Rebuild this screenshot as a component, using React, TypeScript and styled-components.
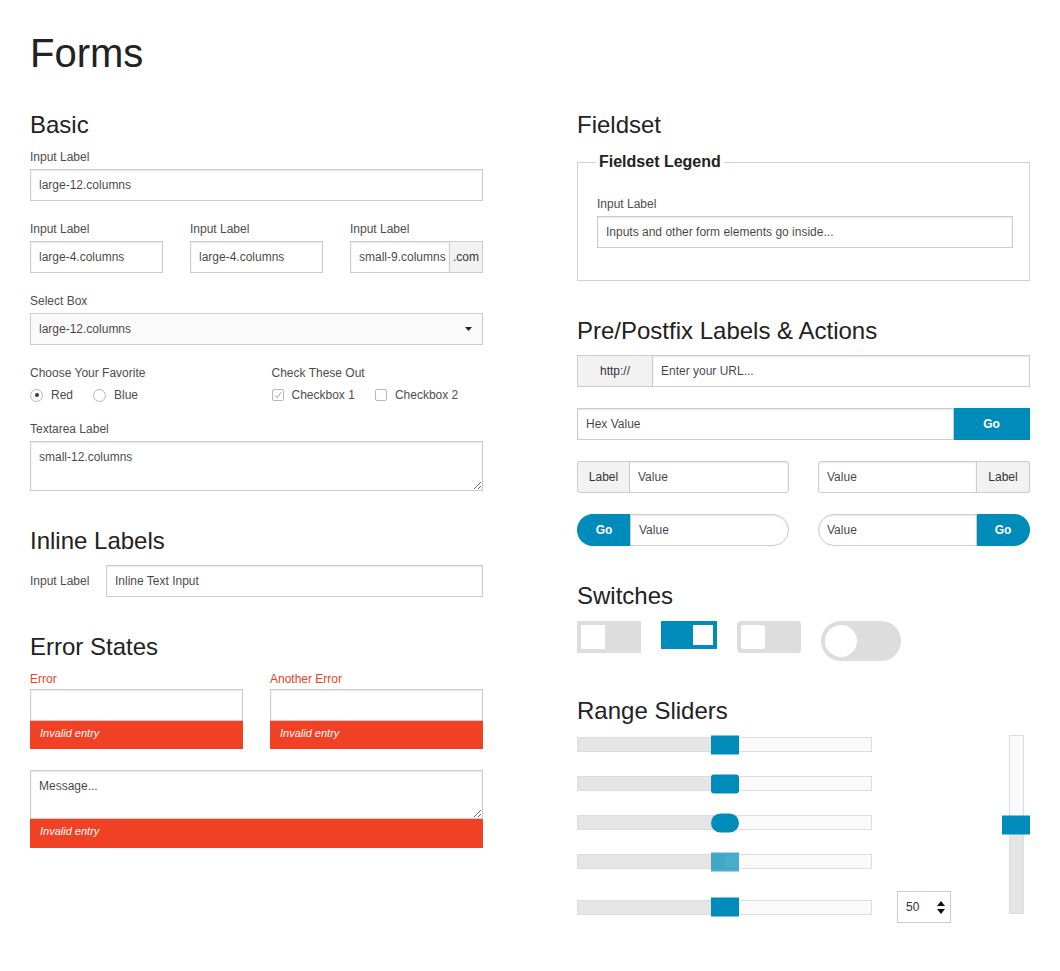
import { createGlobalStyle, styled } from 'styled-components'

type Shape = 'square' | 'radius' | 'round'

const blue = '#008cba'
const red = '#f04124'
const RADIUS: Record<Shape, string> = { square: '0', radius: '3px', round: '1000px' }
const left = (s: Shape) => `${RADIUS[s]} 0 0 ${RADIUS[s]}`
const right = (s: Shape) => `0 ${RADIUS[s]} ${RADIUS[s]} 0`

const switches = [
	{ w: 64, h: 32, knob: 24, shape: 'square' as Shape, on: false },
	{ w: 56, h: 28, knob: 20, shape: 'square' as Shape, on: true },
	{ w: 64, h: 32, knob: 24, shape: 'radius' as Shape, on: false },
	{ w: 80, h: 40, knob: 32, shape: 'round' as Shape, on: false },
]

const sliders = [
	{ shape: 'square' as Shape, value: 50 },
	{ shape: 'radius' as Shape, value: 50 },
	{ shape: 'round' as Shape, value: 50 },
	{ shape: 'square' as Shape, value: 50, disabled: true },
	{ shape: 'square' as Shape, value: 50, withNumber: true },
]

export default function App() {
	return (
		<>
			<GlobalStyle />
			<Page>
				<Title>Forms</Title>
				<Columns>
					<Column>
						<Section>
							<Heading>Basic</Heading>
							<Field>
								<Label>Input Label</Label>
								<TextInput readOnly defaultValue="large-12.columns" />
							</Field>
							<Field>
								<Grid $cols={3} $gap={27}>
									<div>
										<Label>Input Label</Label>
										<TextInput readOnly defaultValue="large-4.columns" />
									</div>
									<div>
										<Label>Input Label</Label>
										<TextInput readOnly defaultValue="large-4.columns" />
									</div>
									<div>
										<Label>Input Label</Label>
										<Group>
											<GroupInput readOnly defaultValue="small-9.columns" />
											<Addon $w={33} $side="right">.com</Addon>
										</Group>
									</div>
								</Grid>
							</Field>
							<Field>
								<Label>Select Box</Label>
								<SelectBox>
									<span>large-12.columns</span>
									<svg width="7" height="4" viewBox="0 0 7 4">
										<path d="M0 0h7L3.5 4z" fill="#222" />
									</svg>
								</SelectBox>
							</Field>
							<Field>
								<Grid $cols={2} $gap={30}>
									<div>
										<Label>Choose Your Favorite</Label>
										<OptionRow>
											<Option>
												<Radio $checked />
												Red
											</Option>
											<Option>
												<Radio />
												Blue
											</Option>
										</OptionRow>
									</div>
									<div>
										<Label>Check These Out</Label>
										<OptionRow>
											<Option>
												<Check>
													<svg width="10" height="10" viewBox="0 0 10 10">
														<path d="M2 5.2l2.2 2.6L8.2 2" fill="none" stroke="#a8a8a8" strokeWidth="1" />
													</svg>
												</Check>
												Checkbox 1
											</Option>
											<Option>
												<Check />
												Checkbox 2
											</Option>
										</OptionRow>
									</div>
								</Grid>
							</Field>
							<Field $gap={16}>
								<Label>Textarea Label</Label>
								<TextArea readOnly defaultValue="small-12.columns" $h={50} />
							</Field>
						</Section>

						<Section>
							<Heading>Inline Labels</Heading>
							<InlineRow>
								<InlineLabel>Input Label</InlineLabel>
								<TextInput readOnly defaultValue="Inline Text Input" />
							</InlineRow>
						</Section>

						<Section>
							<Heading>Error States</Heading>
							<Grid $cols={2} $gap={27}>
								<div>
									<Label $error>Error</Label>
									<TextInput readOnly />
									<ErrorBar>Invalid entry</ErrorBar>
								</div>
								<div>
									<Label $error>Another Error</Label>
									<TextInput readOnly />
									<ErrorBar>Invalid entry</ErrorBar>
								</div>
							</Grid>
							<Field $gap={21}>
								<TextArea readOnly defaultValue="Message..." $h={49} />
								<ErrorBar $tall>Invalid entry</ErrorBar>
							</Field>
						</Section>
					</Column>

					<Column>
						<Section>
							<Heading>Fieldset</Heading>
							<Fieldset>
								<Legend>Fieldset Legend</Legend>
								<Label>Input Label</Label>
								<TextInput readOnly defaultValue="Inputs and other form elements go inside..." />
							</Fieldset>
						</Section>

						<Section>
							<Heading>Pre/Postfix Labels &amp; Actions</Heading>
							<Rows>
								<Group>
									<Addon $w={75} $side="left">http://</Addon>
									<GroupInput readOnly defaultValue="Enter your URL..." />
								</Group>
								<Group>
									<GroupInput readOnly defaultValue="Hex Value" />
									<Addon $w={76} $side="right" $action>Go</Addon>
								</Group>
								<Grid $cols={2} $gap={29}>
									<Group>
										<Addon $w={52} $side="left" $r={left('radius')}>Label</Addon>
										<GroupInput readOnly defaultValue="Value" $r={right('radius')} />
									</Group>
									<Group>
										<GroupInput readOnly defaultValue="Value" $r={left('radius')} />
										<Addon $w={53} $side="right" $r={right('radius')}>Label</Addon>
									</Group>
								</Grid>
								<Grid $cols={2} $gap={29}>
									<Group>
										<Addon $w={53} $side="left" $action $r={left('round')}>Go</Addon>
										<GroupInput readOnly defaultValue="Value" $r={right('round')} />
									</Group>
									<Group>
										<GroupInput readOnly defaultValue="Value" $r={left('round')} />
										<Addon $w={53} $side="right" $action $r={right('round')}>Go</Addon>
									</Group>
								</Grid>
							</Rows>
						</Section>

						<Section>
							<Heading>Switches</Heading>
							<SwitchRow>
								{switches.map((s, i) => (
									<SwitchTrack key={i} $w={s.w} $h={s.h} $shape={s.shape} $on={s.on}>
										<Knob $size={s.knob} $shape={s.shape} />
									</SwitchTrack>
								))}
							</SwitchRow>
						</Section>

						<Section>
							<Heading>Range Sliders</Heading>
							<SliderArea>
								<SliderStack>
									{sliders.map((s, i) => (
										<SliderRow key={i} $tall={s.withNumber}>
											<Track>
												<Fill style={{ width: `${s.value}%` }} />
												<Handle $shape={s.shape} $disabled={s.disabled} style={{ left: `${s.value}%` }} />
											</Track>
											{s.withNumber && (
												<NumberBox>
													<span>50</span>
													<svg width="8" height="13" viewBox="0 0 8 13">
														<path d="M4 0L8 5H0z M0 8h8L4 13z" fill="#111" />
													</svg>
												</NumberBox>
											)}
										</SliderRow>
									))}
								</SliderStack>
								<VerticalWrap>
									<VerticalTrack>
										<VerticalFill style={{ height: '50%' }} />
										<VerticalHandle style={{ top: '50%' }} />
									</VerticalTrack>
								</VerticalWrap>
							</SliderArea>
						</Section>
					</Column>
				</Columns>
			</Page>
		</>
	)
}

const GlobalStyle = createGlobalStyle`
	* {
		box-sizing: border-box;
	}

	body {
		margin: 0;
		background: #fff;
		color: #222;
		font-family: "Liberation Sans", Arial, Helvetica, sans-serif;
	}
`

const Page = styled.main`
	padding: 33px 30px 40px;
`

const Title = styled.h1`
	margin: 0 0 40px;
	font-size: 40px;
	line-height: 40px;
	font-weight: 400;
	color: #222;
`

const Columns = styled.div`
	display: grid;
	grid-template-columns: 453px 453px;
	column-gap: 94px;
	align-items: start;
`

const Column = styled.div`
	display: flex;
	flex-direction: column;
	gap: 38px;
`

const Section = styled.section`
	display: flex;
	flex-direction: column;
`

const Heading = styled.h3`
	margin: 0 0 12px;
	font-size: 24px;
	line-height: 24px;
	font-weight: 400;
	color: #222;
`

const Field = styled.div<{ $gap?: number }>`
	margin-top: ${p => p.$gap ?? 20}px;

	${Heading} + & {
		margin-top: 0;
	}
`

const Grid = styled.div<{ $cols: number; $gap: number }>`
	display: grid;
	grid-template-columns: repeat(${p => p.$cols}, minmax(0, 1fr));
	column-gap: ${p => p.$gap}px;
`

const Rows = styled.div`
	display: flex;
	flex-direction: column;
	gap: 21px;
`

const Label = styled.label<{ $error?: boolean }>`
	display: block;
	margin-bottom: ${p => (p.$error ? 2 : 4)}px;
	font-size: 12px;
	line-height: 16px;
	color: ${p => (p.$error ? red : '#4d4d4d')};
`

const TextInput = styled.input`
	display: block;
	width: 100%;
	height: 32px;
	margin: 0;
	padding: 0 8px;
	border: 1px solid #ccc;
	border-radius: 0;
	background: #fff;
	box-shadow: inset 0 1px 2px rgba(0, 0, 0, 0.1);
	font-family: inherit;
	font-size: 12px;
	color: rgba(0, 0, 0, 0.75);
	outline: none;
`

const Group = styled.div`
	display: flex;
	height: 32px;
	min-width: 0;
`

const GroupInput = styled(TextInput)<{ $r?: string }>`
	flex: 1 1 0;
	min-width: 0;
	width: 0;
	padding-right: 2px;
	border-radius: ${p => p.$r ?? '0'};
`

const Addon = styled.span<{ $w: number; $side: 'left' | 'right'; $action?: boolean; $r?: string }>`
	flex: none;
	display: flex;
	align-items: center;
	justify-content: center;
	width: ${p => p.$w}px;
	border: 1px solid ${p => (p.$action ? blue : '#ccc')};
	${p => (p.$side === 'left' ? 'border-right: none;' : 'border-left: none;')}
	border-radius: ${p => p.$r ?? '0'};
	background: ${p => (p.$action ? blue : '#f2f2f2')};
	color: ${p => (p.$action ? '#fff' : '#333')};
	font-size: 12px;
	font-weight: ${p => (p.$action ? 700 : 400)};
`

const SelectBox = styled.div`
	display: flex;
	align-items: center;
	justify-content: space-between;
	height: 32px;
	padding: 0 10px 0 8px;
	border: 1px solid #ccc;
	background: #fafafa;
	font-size: 12px;
	color: rgba(0, 0, 0, 0.75);
`

const OptionRow = styled.div`
	display: flex;
	align-items: center;
	gap: 20px;
	height: 20px;
`

const Option = styled.label`
	display: flex;
	align-items: center;
	gap: 8px;
	font-size: 12px;
	color: #4d4d4d;
`

const Radio = styled.span<{ $checked?: boolean }>`
	display: flex;
	align-items: center;
	justify-content: center;
	width: 13px;
	height: 13px;
	border: 1px solid #b8b8b8;
	border-radius: 50%;
	background: #fff;

	&::after {
		content: '';
		width: 4px;
		height: 4px;
		border-radius: 50%;
		background: ${p => (p.$checked ? '#3a3a3a' : 'transparent')};
	}
`

const Check = styled.span`
	display: flex;
	align-items: center;
	justify-content: center;
	width: 12px;
	height: 12px;
	border: 1px solid #b8b8b8;
	border-radius: 2px;
	background: #fff;
`

const TextArea = styled.textarea<{ $h: number }>`
	display: block;
	width: 100%;
	height: ${p => p.$h}px;
	margin: 0;
	padding: 8px;
	border: 1px solid #ccc;
	box-shadow: inset 0 1px 2px rgba(0, 0, 0, 0.1);
	font-family: inherit;
	font-size: 12px;
	line-height: 14px;
	color: rgba(0, 0, 0, 0.75);
	outline: none;
`

const InlineRow = styled.div`
	display: grid;
	grid-template-columns: 76px minmax(0, 1fr);
	align-items: center;
`

const InlineLabel = styled.label`
	font-size: 12px;
	color: #4d4d4d;
`

const ErrorBar = styled.small<{ $tall?: boolean }>`
	display: block;
	padding: 6px 10px ${p => (p.$tall ? 10 : 9)}px;
	background: ${red};
	color: #fff;
	font-size: 11px;
	line-height: 13px;
	font-style: italic;
`

const Fieldset = styled.fieldset`
	min-width: 0;
	margin: 3px 0 0;
	padding: 24px 16px 32px 19px;
	border: 1px solid #d0d0d0;
`

const Legend = styled.legend`
	margin-left: -1px;
	padding: 0 3px;
	font-size: 16px;
	line-height: 20px;
	font-weight: 700;
	color: #222;
`

const SwitchRow = styled.div`
	display: flex;
	align-items: flex-start;
	gap: 20px;
	margin-top: 1px;
`

const SwitchTrack = styled.div<{ $w: number; $h: number; $shape: Shape; $on: boolean }>`
	display: flex;
	justify-content: ${p => (p.$on ? 'flex-end' : 'flex-start')};
	width: ${p => p.$w}px;
	height: ${p => p.$h}px;
	padding: 4px;
	border-radius: ${p => (p.$shape === 'radius' ? '4px' : RADIUS[p.$shape])};
	background: ${p => (p.$on ? blue : '#ddd')};
`

const Knob = styled.span<{ $size: number; $shape: Shape }>`
	width: ${p => p.$size}px;
	height: ${p => p.$size}px;
	border-radius: ${p => RADIUS[p.$shape]};
	background: #fff;
`

const SliderArea = styled.div`
	display: flex;
	justify-content: space-between;
	align-items: flex-start;
`

const SliderStack = styled.div`
	display: flex;
	flex-direction: column;
	gap: 20px;
`

const SliderRow = styled.div<{ $tall?: boolean }>`
	display: flex;
	align-items: center;
	gap: 25px;
	height: ${p => (p.$tall ? 32 : 19)}px;
`

const Track = styled.div`
	position: relative;
	width: 295px;
	height: 15px;
	border: 1px solid #ddd;
	background: #fafafa;
`

const Fill = styled.div`
	height: 100%;
	background: #e5e5e5;
`

const Handle = styled.span<{ $shape: Shape; $disabled?: boolean }>`
	position: absolute;
	top: 50%;
	width: 28px;
	height: 19px;
	transform: translate(-50%, -50%);
	border-radius: ${p => RADIUS[p.$shape]};
	background: ${blue};
	opacity: ${p => (p.$disabled ? 0.7 : 1)};
`

const NumberBox = styled.div`
	display: flex;
	align-items: center;
	justify-content: space-between;
	width: 54px;
	height: 32px;
	padding: 0 5px 0 8px;
	border: 1px solid #ccc;
	font-size: 12px;
	color: #333;
`

const VerticalWrap = styled.div`
	display: flex;
	justify-content: center;
	width: 28px;
`

const VerticalTrack = styled.div`
	position: relative;
	display: flex;
	flex-direction: column;
	justify-content: flex-end;
	width: 15px;
	height: 179px;
	border: 1px solid #ddd;
	background: #fafafa;
`

const VerticalFill = styled.div`
	width: 100%;
	background: #e5e5e5;
`

const VerticalHandle = styled.span`
	position: absolute;
	left: 50%;
	width: 28px;
	height: 19px;
	transform: translate(-50%, -50%);
	background: ${blue};
`
